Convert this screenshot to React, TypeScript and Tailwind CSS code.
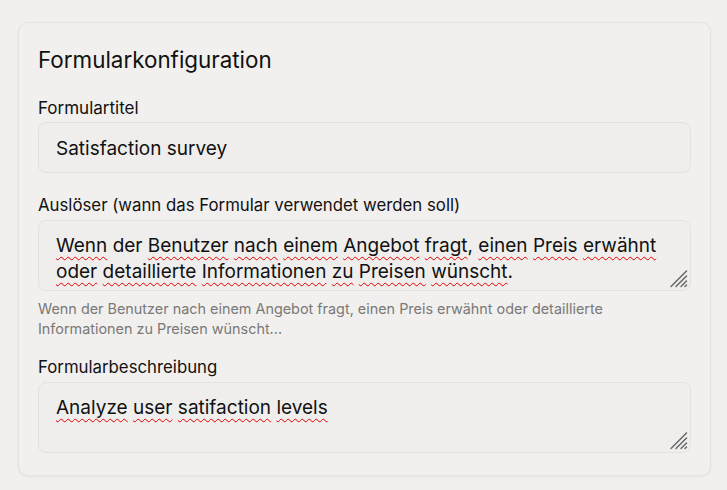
import React from "react";

const font = { fontFamily: "Inter, 'Noto Sans', sans-serif" };

// rot unterstrichenes Wort (Rechtschreibprüfung)
const Sp: React.FC<{ children: React.ReactNode }> = ({ children }) => (
  <span className="underline decoration-wavy decoration-[#e60000] decoration-[1px] underline-offset-[4px] [text-decoration-skip-ink:none]">
    {children}
  </span>
);

const Grip = () => (
  <svg className="absolute right-[2px] bottom-[2px]" width="19" height="19" viewBox="0 0 19 19">
    <g stroke="#666" strokeWidth="1.4" strokeLinecap="round">
      <line x1="17.5" y1="2" x2="2" y2="17.5" />
      <line x1="17.5" y1="7" x2="7" y2="17.5" />
      <line x1="17.5" y1="12" x2="12" y2="17.5" />
      <line x1="17.5" y1="16" x2="16" y2="17.5" />
    </g>
  </svg>
);

export default function App() {
  return (
    <div className="min-h-[490px] w-[727px] bg-[#f1f0ee] pt-[22px] pl-[18px]" style={font}>
      <div className="w-[693px] rounded-[10px] border border-[#e4e3e1] bg-[#f1f0ee] px-[19px] pt-[23px] pb-[22px] shadow-[0_1px_3px_rgba(0,0,0,0.06)]">
        <h2 className="text-[22.4px] leading-[28px] font-normal text-[#111]">Formularkonfiguration</h2>

        <div className="mt-[22px] text-[17px] leading-[24px] text-[#111]">Formulartitel</div>
        <div className="mt-[2px] flex h-[51px] items-center rounded-[8px] border border-[#e3e2e0] bg-[#efeeec] px-[17px] pt-[3px] text-[19px] text-[#111]">
          Satisfaction survey
        </div>

        <div className="mt-[20px] text-[16.8px] leading-[24px] text-[#111]">
          Auslöser (wann das Formular verwendet werden soll)
        </div>
        <div className="relative mt-[3px] h-[71px] rounded-[8px] border border-[#e3e2e0] bg-[#efeeec] pl-[17px] pr-[14px] pt-[12px] text-[19px] leading-[26px] text-[#111]">
          <Sp>Wenn</Sp> der <Sp>Benutzer</Sp> <Sp>nach</Sp> <Sp>einem</Sp> <Sp>Angebot</Sp> <Sp>fragt</Sp>,{" "}
          <Sp>einen</Sp> <Sp>Preis</Sp> <Sp>erwähnt</Sp> <Sp>oder</Sp> <Sp>detaillierte</Sp>{" "}
          <Sp>Informationen</Sp> <Sp>zu</Sp> <Sp>Preisen</Sp> <Sp>wünscht</Sp>.
          <Grip />
        </div>
        <p className="mt-[8px] text-[14.4px] leading-[20px] text-[#7a7977]">
          Wenn der Benutzer nach einem Angebot fragt, einen Preis erwähnt oder detaillierte Informationen zu Preisen wünscht...
        </p>

        <div className="mt-[16px] text-[16.8px] leading-[24px] text-[#111]">Formularbeschreibung</div>
        <div className="relative mt-[3px] h-[71px] rounded-[8px] border border-[#e3e2e0] bg-[#efeeec] pl-[17px] pr-[14px] pt-[12px] text-[19px] leading-[26px] text-[#111]">
          <Sp>Analyze</Sp> <Sp>user</Sp> <Sp>satifaction</Sp> <Sp>levels</Sp>
          <Grip />
        </div>
      </div>
    </div>
  );
}
